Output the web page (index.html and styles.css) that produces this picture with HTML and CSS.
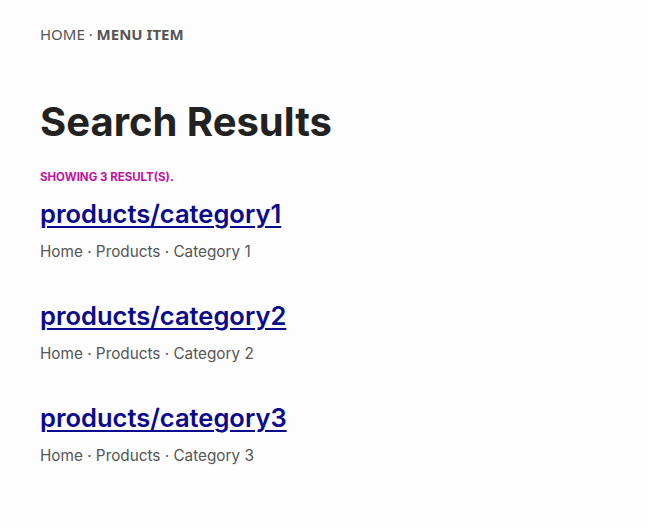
FILE: index.html
```html
<!DOCTYPE html>
<html lang="en">
<head>
<meta charset="utf-8">
<title>Search Results</title>
<link rel="stylesheet" href="styles.css">
</head>
<body>
<main class="page">
  <nav class="crumbs">HOME · <strong>MENU ITEM</strong></nav>
  <h1 class="title">Search Results</h1>
  <p class="count">SHOWING 3 RESULT(S).</p>
  <ul class="results">
    <li class="result">
      <a class="result-link" href="#">products/category1</a>
      <p class="result-path">Home · Products · Category 1</p>
    </li>
    <li class="result">
      <a class="result-link" href="#">products/category2</a>
      <p class="result-path">Home · Products · Category 2</p>
    </li>
    <li class="result">
      <a class="result-link" href="#">products/category3</a>
      <p class="result-path">Home · Products · Category 3</p>
    </li>
  </ul>
</main>
</body>
</html>
```
FILE: styles.css
```css
html, body {
  margin: 0;
  padding: 0;
  background: #fdfdfd;
}
.page {
  padding: 24px 40px;
  font-family: Inter, "Noto Sans", sans-serif;
}
.crumbs {
  font-family: "Noto Sans", sans-serif;
  font-size: 15px;
  color: #555;
  line-height: 20px;
}
.crumbs strong {
  font-weight: 700;
}
.title {
  margin: 54px 0 0;
  font-size: 40px;
  line-height: 48px;
  font-weight: 700;
  color: #222;
  letter-spacing: 0;
}
.count {
  margin: 24px 0 0;
  font-size: 11.5px;
  line-height: 14px;
  font-weight: 700;
  color: #c0139e;
}
.results {
  list-style: none;
  margin: 12px 0 0;
  padding: 0;
  display: flex;
  flex-direction: column;
  gap: 34px;
}
.result-link {
  display: inline-block;
  font-size: 25.5px;
  line-height: 36px;
  font-weight: 600;
  color: #0a0a8c;
  text-decoration: underline;
  text-decoration-thickness: 2px;
  text-underline-offset: 3px;
}
.result-path {
  margin: 8px 0 0;
  font-size: 15.3px;
  line-height: 24px;
  color: #555;
}
```
